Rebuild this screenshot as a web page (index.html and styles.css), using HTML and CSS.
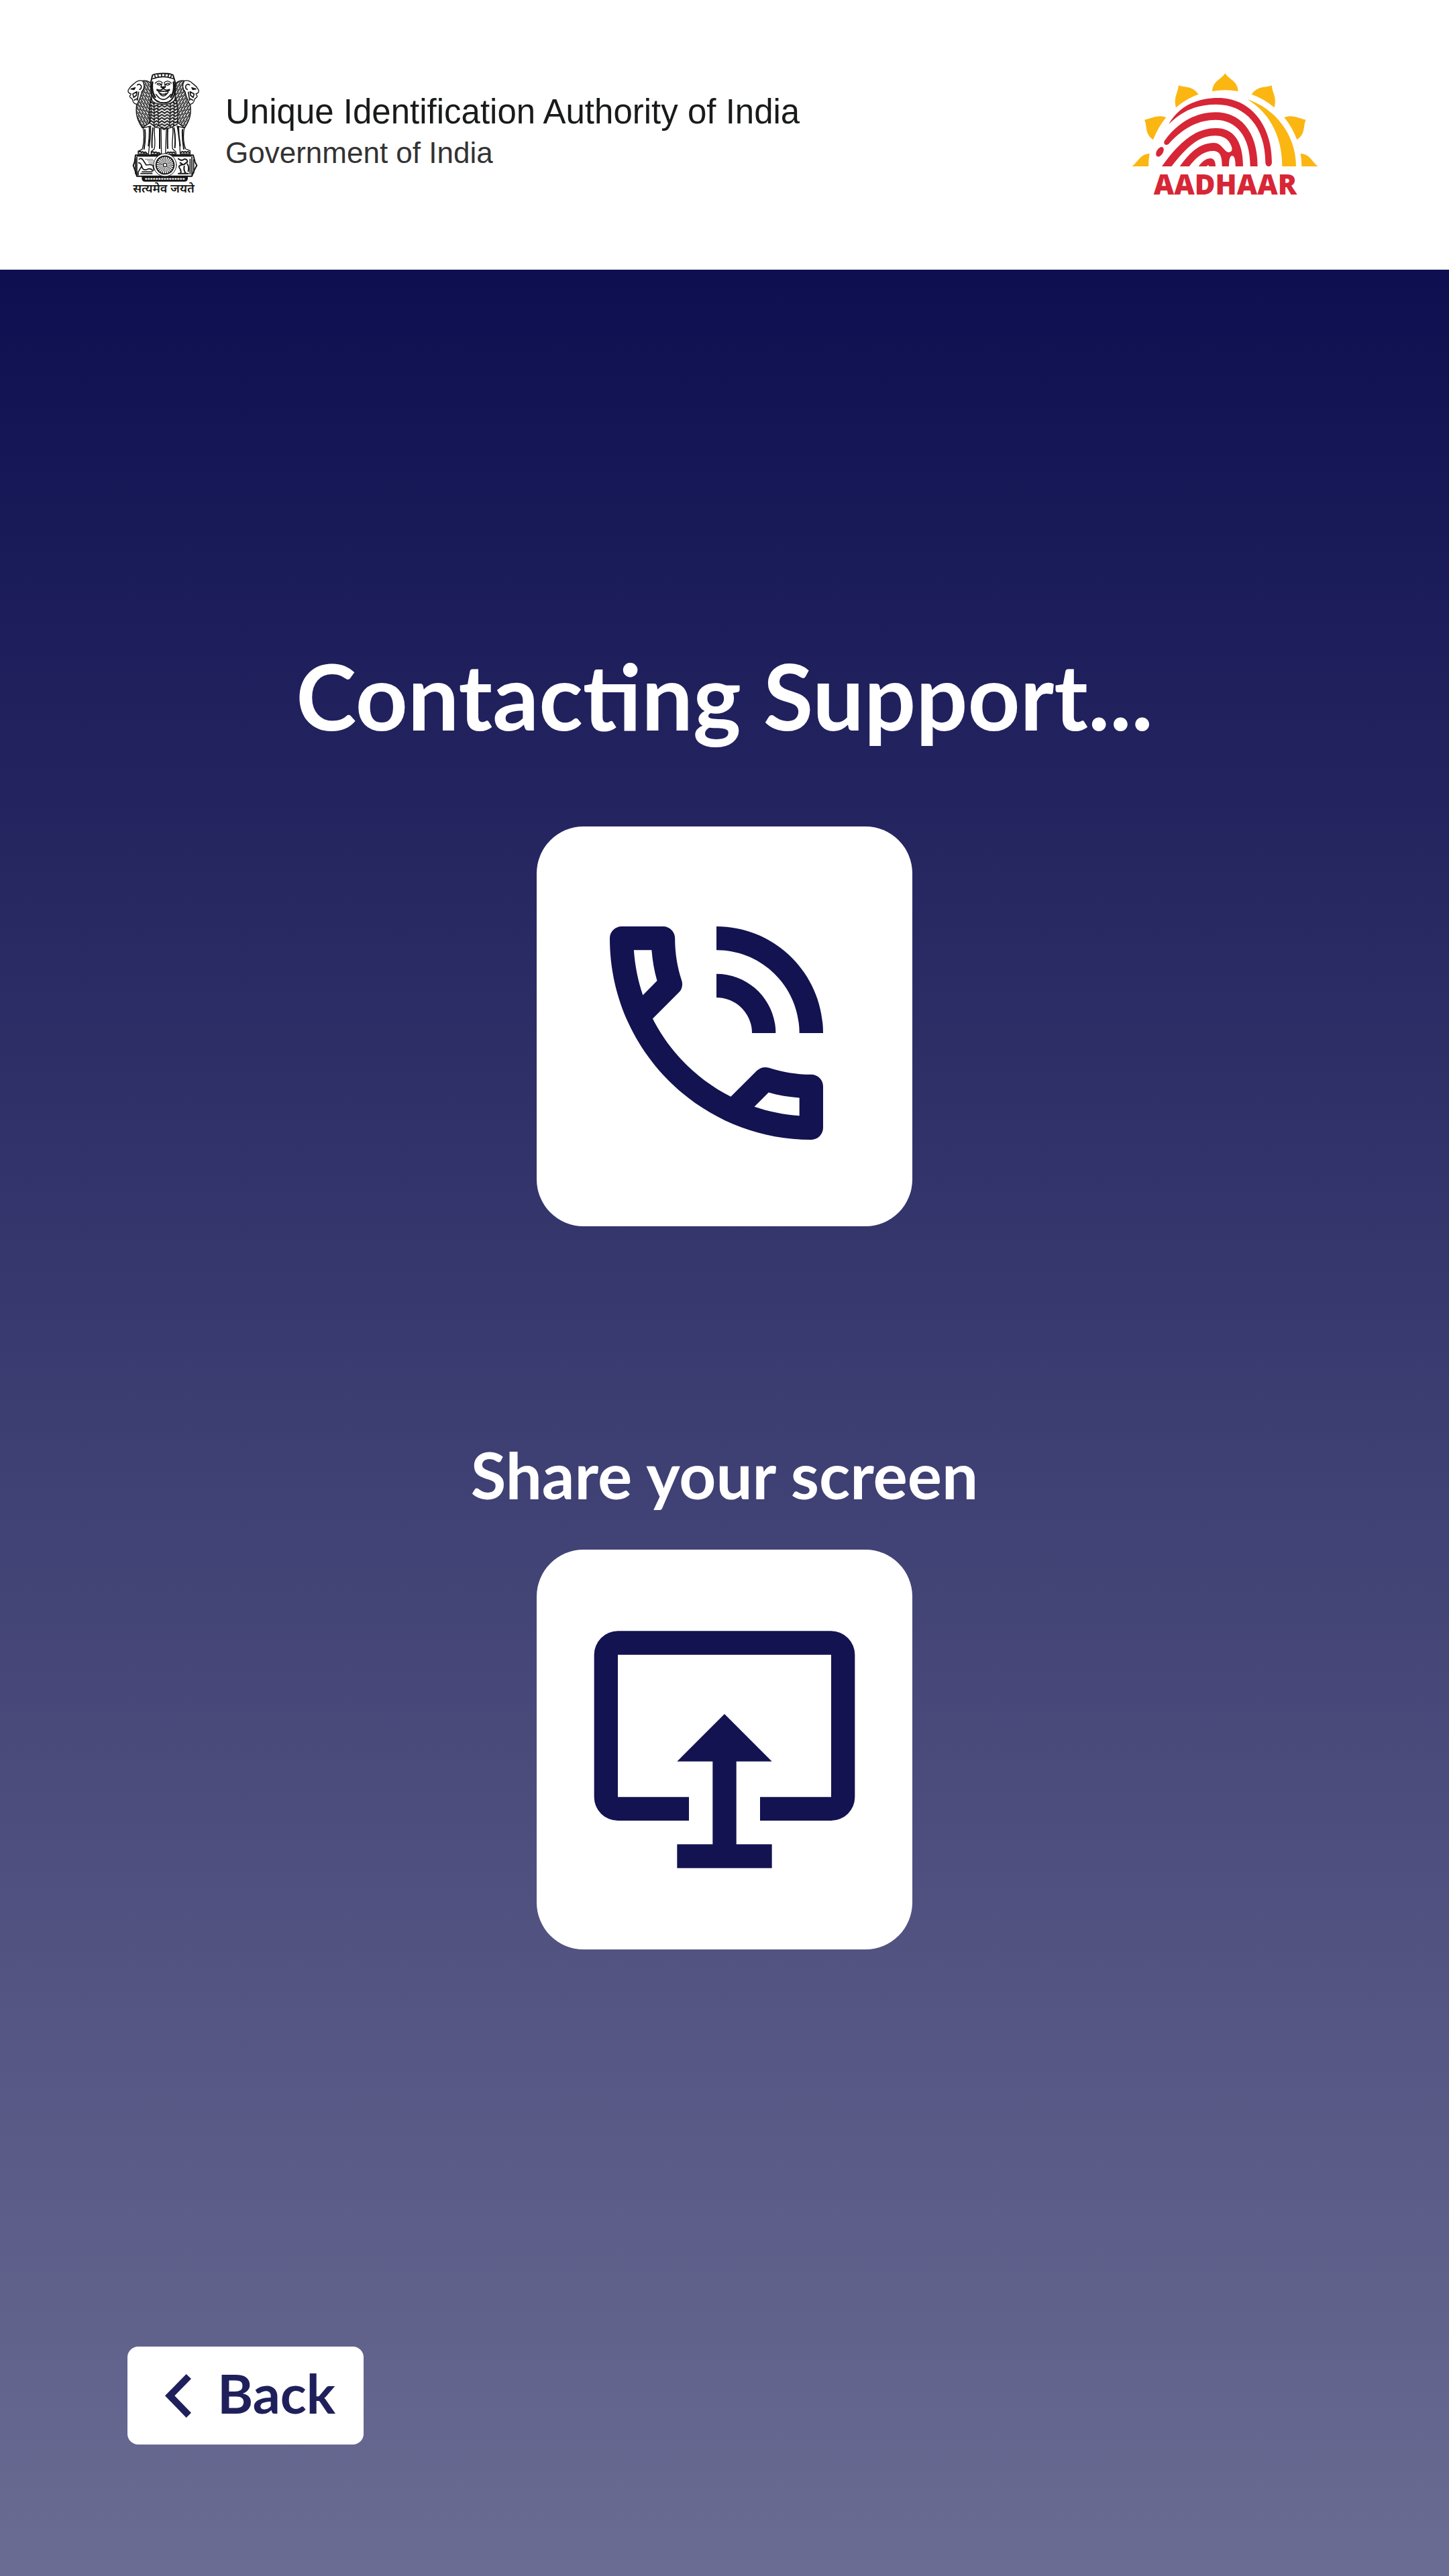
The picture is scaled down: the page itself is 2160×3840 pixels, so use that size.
FILE: index.html
```html
<!DOCTYPE html>
<html lang="en">
<head>
<meta charset="utf-8">
<meta name="viewport" content="width=device-width, initial-scale=1">
<title>Contacting Support</title>
<link rel="stylesheet" href="styles.css">
</head>
<body>
<header class="header">
  <div class="authority">
    <div class="emblem">
      <svg class="emblem-art" viewBox="30 36 324 492" fill="none" stroke="#151515" stroke-width="4" stroke-linejoin="round" stroke-linecap="round" aria-hidden="true">
        <defs>
          <pattern id="curlR" width="14" height="16" patternUnits="userSpaceOnUse" patternTransform="rotate(12)">
            <rect width="14" height="16" fill="#fff" stroke="none"/>
            <path d="M0 3q8 0 14 9M0 12l4 4M10 0l4 2" stroke-width="5"/>
          </pattern>
          <pattern id="curlL" width="14" height="16" patternUnits="userSpaceOnUse" patternTransform="rotate(-12)">
            <rect width="14" height="16" fill="#fff" stroke="none"/>
            <path d="M14 3q-8 0-14 9M14 12l-4 4M4 0l-4 2" stroke-width="5"/>
          </pattern>
          <pattern id="chev" x="184" y="0" width="24" height="14" patternUnits="userSpaceOnUse">
            <rect width="24" height="14" fill="#fff" stroke="none"/>
            <path d="M0 0l12 9l12-9M0 14l12 9l12-9" stroke-width="6"/>
          </pattern>
        </defs>
        <!-- side manes -->
        <path d="M82 82C92 70 118 68 134 84L140 176L128 262L96 284C80 258 66 232 70 190Z" fill="url(#curlR)"/>
        <path d="M300 82C290 70 264 68 246 84L242 176L256 262L286 284C302 258 316 232 312 190Z" fill="url(#curlL)"/>
        <!-- side heads in profile -->
        <path d="M98 74C84 70 72 74 62 84C52 92 42 98 34 114C30 124 38 130 46 132L40 142C42 152 50 150 52 156C54 170 62 178 74 178C82 160 92 140 94 122C106 112 108 90 98 74Z" fill="#fff"/>
        <path d="M284 74C298 70 310 74 320 84C330 92 340 98 348 114C352 124 344 130 336 132L342 142C340 152 332 150 330 156C328 170 320 178 308 178C300 160 290 140 288 122C276 112 274 90 284 74Z" fill="#fff"/>
        <path d="M46 110l18-6l-4 8zM54 132l18-10l-2 16l-12 10zM60 160l12-6M74 92q12-8 18 6q0 12-8 14M80 124l-6 36" stroke-width="5"/>
        <path d="M336 110l-18-6l4 8zM328 132l-18-10l2 16l12 10zM322 160l-12-6M308 92q-12-8-18 6q0 12 8 14M302 124l6 36" stroke-width="5"/>
        <!-- central mane -->
        <path d="M134 152C140 170 160 178 192 178C222 178 238 168 246 150C256 190 258 230 252 268L226 282C216 264 204 288 194 292C182 288 170 262 158 282L130 262C126 226 126 188 134 152Z" fill="url(#chev)"/>
        <path d="M134 160q4 60-2 96M148 172q4 60 0 104M166 178q0 50 4 90M222 178q0 50-4 90M238 168q2 60-2 106" stroke-dasharray="12 5" stroke-width="4"/>
        <!-- central head -->
        <path d="M142 48C160 38 220 38 234 48L244 82L240 134C232 158 214 172 192 172C166 172 148 158 138 134L134 82Z" fill="#fff" stroke-width="6"/>
        <path d="M144 64q46-18 90 0M152 50l4 10M166 46l2 11M182 44l1 11M198 44l-1 11M214 46l-3 11M226 50l-4 10" stroke-width="5"/>
        <path d="M142 80q-6 40 12 66M236 80q6 40-12 66" stroke-dasharray="9 4" stroke-width="8"/>
        <path d="M154 84q16-18 32-2M194 82q16-16 32 2M162 88q10-8 18 2q-8 6-18-2zM200 90q8-10 20-2q-12 8-20 2zM184 86l-4 16M196 86l4 16" stroke-width="4"/>
        <path d="M180 100h20l-10 10z" fill="#151515"/>
        <path d="M190 108q-10 12-28 4M190 108q12 12 28 4M162 116q10 8 28 4q18 4 28-4M170 124q20 34 42 0M158 134q30 46 66 0M178 130q12 8 26 0" stroke-width="5"/>
        <!-- legs -->
        <path d="M100 284C106 320 104 352 96 380L78 388V400H124L132 330L134 276ZM152 280C146 310 158 344 150 378L136 390V402H182L180 286ZM204 288L200 402H248L246 390L232 378C226 344 238 310 232 280ZM252 276L262 330L266 400H310V386L290 378C280 352 278 320 284 284Z" fill="#fff"/>
        <path d="M128 280q2 40-4 84M108 292q4 40-4 86M144 284q-6 40-4 88M174 288v88M210 288q-2 40 0 88M238 284q8 40 4 88M258 280q0 40 8 84M276 292q-2 40 6 86" stroke-width="6"/>
        <path d="M80 392q6-8 12 2q6-8 12 2q6-8 12 2M138 394q6-8 12 2q8-8 14 2q6-8 12 2M206 396q6-8 12 0q6-8 12 0q6-8 12 0M270 394q6-8 12 0q6-8 12 0q6-8 12 0" stroke-width="6"/>
        <!-- abacus -->
        <path d="M66 406H324L332 436L340 452L330 470L318 500H72L64 474L56 452L62 436Z" fill="#fff" stroke-width="6"/>
        <path d="M76 408H318" stroke-width="9" stroke-dasharray="3 6"/>
        <path d="M66 422v66M72 414v82M78 480v14M326 426v60M318 414v80M310 424v66" stroke-width="5"/>
        <path d="M82 424q10-8 18 4l14 22q20-4 30 2l4 20M80 440q8 0 14 14l-14 24M94 456q4 20 22 14q18-8 28 6M96 480h44M90 488h50" stroke-width="5"/>
        <path d="M110 424h34M120 430h28M124 437h22M128 444h18" stroke-width="2" stroke-dasharray="3 3"/>
        <path d="M258 422q14 12 26 2q14-2 14 12l-16 12q-18 0-22 10M266 440l12 8M298 446q8 10 4 32M262 462q12 16 4 26M284 456q-4 20 8 32M258 488h44" stroke-width="6"/>
        <circle cx="198" cy="450" r="51" fill="#fff" stroke-width="3"/>
        <circle cx="198" cy="450" r="40" stroke-width="6"/>
        <circle cx="198" cy="450" r="25" stroke-width="28" stroke-dasharray="2.5 4.05" stroke-linecap="butt"/>
        <circle cx="198" cy="450" r="8" fill="#fff" stroke-width="4"/>
        <path d="M96 502H298V512Q296 522 286 522H108Q98 522 96 512Z" fill="#151515"/>
        <path d="M112 512H288" stroke="#fff" stroke-width="7" stroke-dasharray="3 9"/>
      </svg>
      <span class="motto" lang="hi">सत्यमेव जयते</span>
    </div>
    <div class="authority-text">
      <p class="authority-name">Unique Identification Authority of India</p>
      <p class="authority-gov">Government of India</p>
    </div>
  </div>
  <div class="aadhaar">
    <svg class="aadhaar-art" viewBox="51 42 837 423" aria-hidden="true">
      <g fill="#fbb612">
        <path d="M469 45C484 74 525 78 527 126Q469 116 411 126C414 78 453 74 469 45Z"/>
        <path d="M260 100C293 112 320 100 350 140Q297 158 249 199C236 150 260 134 260 100Z"/>
        <path d="M678 100C645 112 618 100 587 140Q641 158 689 199C702 150 678 134 678 100Z"/>
        <path d="M108 254C138 248 168 228 205 243Q170 284 147 343C107 314 122 282 108 254Z"/>
        <path d="M830 254C800 248 770 228 733 243Q768 284 790 343C831 314 816 282 830 254Z"/>
        <path d="M52 462C78 446 88 406 131 405Q126 430 126 462Z"/>
        <path d="M885 462C859 446 849 406 806 405Q811 430 811 462Z"/>
        <path d="M568 162C690 202 786 318 786 462H724C724 344 680 230 568 162Z"/>
      </g>
      <g fill="#d72636">
        <path d="M217 273C260 196 340 156 438 156C576 156 678 270 678 444C676 468 650 468 649 444C649 286 560 185 430 185C342 185 278 212 217 273Z"/>
        <path d="M199 346C260 262 340 220 426 220C532 220 614 300 614 462H581C581 322 515 254 426 254C346 254 278 294 218 360C204 374 189 360 199 346Z"/>
        <ellipse cx="177" cy="397" rx="14" ry="24" transform="rotate(32 177 397)"/>
        <path d="M186 462C266 350 338 291 428 291C504 291 549 346 549 462H515C515 436 512 415 500 415C489 415 486 436 486 462H455C455 420 448 393 415 393C372 393 340 422 308 462H266C310 402 352 357 419 357C455 357 464 399 486 399C500 399 503 384 496 370C484 338 458 325 424 325C352 325 296 374 229 462Z"/>
        <path d="M350 462C368 438 384 426 405 426C420 428 426 442 426 462H398C396 456 390 457 386 462Z"/>
      </g>
    </svg>
    <span class="aadhaar-name">AADHAAR</span>
  </div>
</header>
<main class="main">
  <h1 class="title">Contacting Support...</h1>
  <div class="tile tile-call">
    <svg class="tile-icon" viewBox="0 0 24 24" aria-hidden="true">
      <path d="M20 15.5c-1.25 0-2.45-.2-3.57-.57-.1-.03-.21-.05-.31-.05-.26 0-.51.1-.71.29l-2.2 2.2c-2.83-1.44-5.15-3.75-6.59-6.58l2.2-2.21c.28-.27.36-.66.25-1.01C8.7 6.45 8.5 5.25 8.5 4c0-.55-.45-1-1-1H4c-.55 0-1 .45-1 1 0 9.39 7.61 17 17 17 .55 0 1-.45 1-1v-3.5c0-.55-.45-1-1-1zM5.03 5h1.5c.07.88.22 1.75.46 2.59L5.79 8.8c-.41-1.21-.67-2.48-.76-3.8zM19 18.97c-1.32-.09-2.6-.35-3.8-.76l1.2-1.2c.85.24 1.71.39 2.6.45v1.51zM12 3v2c3.87 0 7 3.13 7 7h2c0-4.97-4.03-9-9-9zm3 9h2c0-2.76-2.24-5-5-5v2c1.66 0 3 1.34 3 3z"/>
    </svg>
  </div>
  <h2 class="subtitle" id="share-label">Share your screen</h2>
  <button class="tile tile-share" type="button" aria-labelledby="share-label">
    <svg class="tile-icon" viewBox="0 0 24 24" aria-hidden="true">
      <path d="M3 2H21A2 2 0 0 1 23 4V16A2 2 0 0 1 21 18H15V16H21V4H3V16H9V18H3A2 2 0 0 1 1 16V4A2 2 0 0 1 3 2ZM12 9L16 13H13V20H16V22H8V20H11V13H8Z"/>
    </svg>
  </button>
  <button class="back" type="button">
    <svg class="back-icon" viewBox="0 0 117 195" aria-hidden="true"><path d="M95 0L117 21L43 97L117 173L95 195L0 97Z"/></svg>
    <span class="back-label">Back</span>
  </button>
</main>
</body>
</html>
```
FILE: styles.css
```css
* { box-sizing: border-box; }

body {
  margin: 0;
  min-height: 100vh;
  display: flex;
  flex-direction: column;
  background: #fff;
  font-family: Lato, sans-serif;
}

h1, h2, p { margin: 0; }

button {
  border: 0;
  font-family: inherit;
  cursor: pointer;
}

svg { display: block; }

.header {
  display: flex;
  justify-content: space-between;
  align-items: flex-start;
  padding: 108px 194px 104px 190px;
}

.authority {
  display: flex;
  gap: 38px;
}

.emblem {
  width: 108px;
  display: flex;
  flex-direction: column;
  align-items: center;
}

.emblem-art {
  width: 108px;
  height: 164px;
}

.motto {
  font-family: "Noto Sans Devanagari", "Noto Sans", sans-serif;
  font-size: 18px;
  font-weight: 600;
  line-height: 22px;
  white-space: nowrap;
  color: #151515;
}

.authority-text {
  padding-top: 28px;
  font-family: "Liberation Sans", sans-serif;
}

.authority-name {
  font-size: 51px;
  line-height: 62px;
  color: #191a1a;
}

.authority-gov {
  font-size: 44px;
  line-height: 60px;
  color: #333;
}

.aadhaar {
  display: flex;
  flex-direction: column;
  align-items: center;
}

.aadhaar-art {
  width: 279px;
  height: 141px;
}

.aadhaar-name {
  font-family: "Open Sans", sans-serif;
  font-size: 42px;
  font-weight: 800;
  line-height: 49px;
  color: #d72636;
}

.main {
  flex: 1;
  display: flex;
  flex-direction: column;
  align-items: center;
  padding: 551px 190px 196px;
  background: linear-gradient(#0e0f50, #6b6c93);
}

.title {
  font-size: 136px;
  font-weight: 700;
  line-height: 168px;
  color: #fff;
}

.subtitle {
  margin-top: 310px;
  font-size: 96px;
  font-weight: 700;
  line-height: 120px;
  color: #fff;
}

.tile {
  border-radius: 70px;
  background: #fff;
}

.tile-call {
  margin-top: 111px;
  padding: 96px 80px 76px 56px;
}

.tile-share {
  margin-top: 52px;
  padding: 86px 68px;
}

.tile-icon {
  width: 424px;
  height: 424px;
  fill: #131351;
}

.back {
  margin-top: auto;
  align-self: flex-start;
  display: flex;
  align-items: center;
  gap: 39px;
  padding: 21px 42px 21px 56px;
  border-radius: 16px;
  background: #fff;
  color: #1f205b;
}

.back-icon {
  width: 39px;
  height: 65px;
  fill: #1f205b;
}

.back-label {
  padding-bottom: 8px;
  font-size: 81px;
  font-weight: 700;
  line-height: 96px;
}
```
